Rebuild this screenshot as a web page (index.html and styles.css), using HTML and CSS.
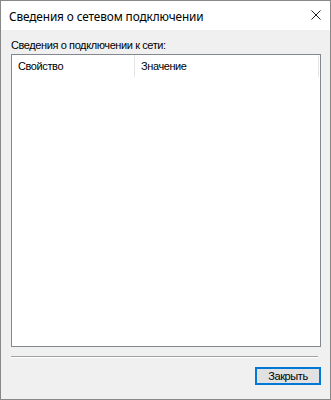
FILE: index.html
```html
<!DOCTYPE html>
<html>
<head>
  <title>Сведения о сетевом подключении</title>
  <link rel="stylesheet" href="styles.css">
</head>
<body>
  <div class="window">
    <div class="titlebar">
      <span class="title">Сведения о сетевом подключении</span>
      <svg class="close" width="10" height="10" viewBox="0 0 10 10">
        <path d="M0.5 0.5 L9.5 9.5 M9.5 0.5 L0.5 9.5" stroke="#222" stroke-width="1" fill="none"/>
      </svg>
    </div>

    <div class="content">
      <div class="label">Сведения о подключении к сети:</div>

      <div class="list">
        <div class="list-header">
          <div class="col col-prop">Свойство</div>
          <div class="col col-value">Значение</div>
        </div>
      </div>

      <div class="divider"></div>

      <div class="buttons">
        <button class="btn default">Закрыть</button>
      </div>
    </div>
  </div>
</body>
</html>
```

FILE: styles.css
```css
html, body {
  margin: 0;
  padding: 0;
}

body {
  width: 331px;
  height: 400px;
  font-family: "Liberation Sans", Arial, sans-serif;
  font-size: 11px;
  letter-spacing: -0.4px;
  color: #000;
  background: #f0f0f0;
}

.window {
  box-sizing: border-box;
  width: 331px;
  height: 400px;
  border: 1px solid #888;
  display: flex;
  flex-direction: column;
  background: #f0f0f0;
}

.titlebar {
  height: 29px;
  background: #fff;
  display: flex;
  align-items: center;
  justify-content: space-between;
  padding: 0 9px 0 8px;
  flex-shrink: 0;
}

.title {
  font-family: "Noto Sans", "DejaVu Sans", sans-serif;
  font-size: 11.8px;
  letter-spacing: -0.1px;
  color: #000;
}

.close {
  margin-top: -1px;
}

.content {
  flex: 1;
  display: flex;
  flex-direction: column;
  padding: 9px 9px 14px 10px;
}

.label {
  height: 13px;
  line-height: 13px;
  margin-bottom: 2px;
}

.list {
  flex: 1;
  background: #fff;
  border: 1px solid #828790;
}

.list-header {
  display: flex;
  height: 22px;
}

.col {
  box-sizing: border-box;
  line-height: 23px;
  padding-left: 6px;
}

.col-prop {
  width: 123px;
  border-right: 1px solid #e5e5e5;
}

.col-value {
  flex: 1;
  margin-right: 1px;
  border-right: 1px solid #e5e5e5;
}

.divider {
  height: 0;
  border-top: 1px solid #a0a0a0;
  border-bottom: 1px solid #fff;
  margin: 9px 3px 0 0;
}

.buttons {
  display: flex;
  justify-content: flex-end;
  margin-top: 9px;
}

.btn {
  box-sizing: border-box;
  width: 66px;
  height: 18px;
  font-family: inherit;
  font-size: 11px;
  letter-spacing: -0.4px;
  color: #000;
  background: #e1e1e1;
  border: 1px solid #adadad;
  padding: 0;
}

.btn.default {
  border: 2px solid #0078d7;
}
```
